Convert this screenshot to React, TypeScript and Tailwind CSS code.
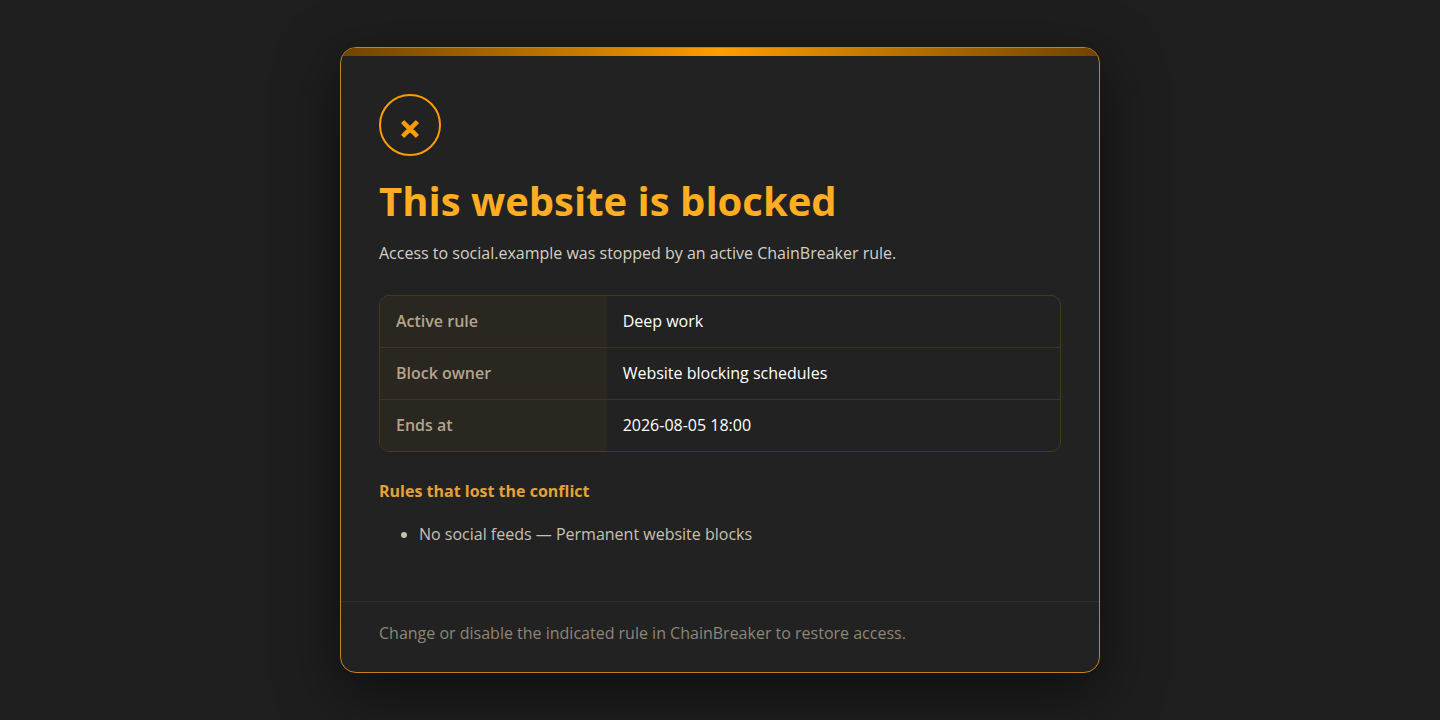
import React from 'react';

interface BlockDetail {
    label: string;
    value: string;
}

const details: BlockDetail[] = [
    { label: 'Active rule', value: 'Deep work' },
    { label: 'Block owner', value: 'Website blocking schedules' },
    { label: 'Ends at', value: '2026-08-05 18:00' },
];

const lostRules: string[] = ['No social feeds — Permanent website blocks'];

const DetailsTable: React.FC = () => {
    return (
        <div className="mt-7 rounded-[10px] border border-[#49391f] overflow-hidden">
            <table className="w-full table-fixed border-collapse text-left leading-[27px]">
                <tbody>
                    {details.map((detail) => (
                        <tr key={detail.label} className="border-b border-[#3f3322] last:border-b-0">
                            <th scope="row" className="w-1/3 bg-[#2a2620] px-4 py-3 font-semibold text-[#b3a58c]">{detail.label}</th>
                            <td className="px-4 py-3 text-white">{detail.value}</td>
                        </tr>
                    ))}
                </tbody>
            </table>
        </div>
    );
};

const App: React.FC = () => {
    return (
        <main className="min-h-screen grid place-items-center bg-[#1e1e1e] p-6 font-['Open_Sans','Noto_Sans',sans-serif] text-base leading-7 text-white">
            <section className="w-full max-w-[760px] overflow-hidden rounded-2xl border border-[#c4821c] bg-[#222222] shadow-[0_18px_60px_rgba(0,0,0,0.55)]">
                <div className="h-2 bg-linear-to-r from-[#704400] via-[#ff9d00] to-[#704400]" />
                <div className="px-[38px] pt-[38px] pb-[53px]">
                    <div className="grid size-[62px] place-items-center rounded-full border-2 border-[#ff9d00]">
                        <svg viewBox="0 0 20 20" className="mt-2 size-5" fill="#ff9d00" stroke="#ff9d00" strokeWidth="1.2" strokeLinejoin="round" aria-hidden="true">
                            <path d="M10 7.6 15.8 1.8 18.2 4.2 12.4 10 18.2 15.8 15.8 18.2 10 12.4 4.2 18.2 1.8 15.8 7.6 10 1.8 4.2 4.2 1.8Z" />
                        </svg>
                    </div>
                    <h1 className="mt-5 text-[40px] leading-[50px] font-bold text-[#ffad22]">This website is blocked</h1>
                    <p className="mt-[13px] text-[#d6d0c4]">Access to social.example was stopped by an active ChainBreaker rule.</p>
                    <DetailsTable />
                    <h2 className="mt-[25px] font-bold text-[#e5a13a]">Rules that lost the conflict</h2>
                    <ul className="mt-[15px] list-disc pl-10 text-[#c8c0b0]">
                        {lostRules.map((rule) => (
                            <li key={rule}>{rule}</li>
                        ))}
                    </ul>
                </div>
                <footer className="border-t border-[#302e2b] px-[38px] pt-[17px] pb-[25px] text-[#8f8675]">
                    Change or disable the indicated rule in ChainBreaker to restore access.
                </footer>
            </section>
        </main>
    );
};

export default App;
